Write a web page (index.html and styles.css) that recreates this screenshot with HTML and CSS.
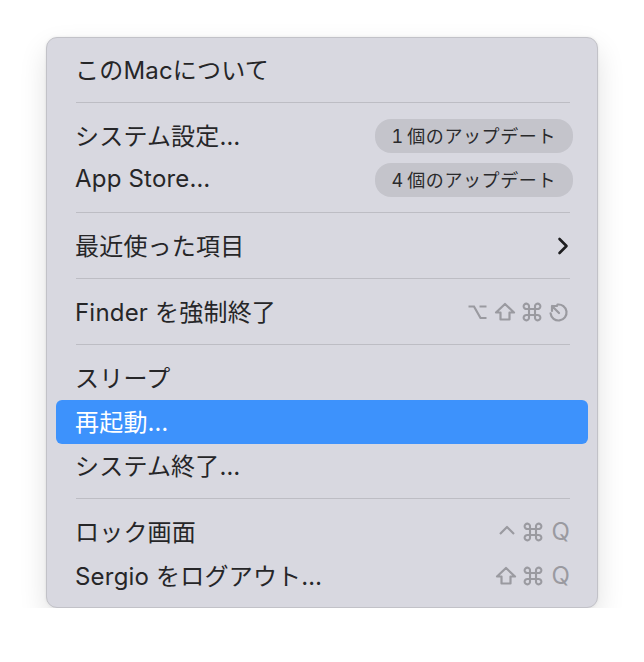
FILE: index.html
```html
<!DOCTYPE html>
<html lang="ja">
<head>
<meta charset="utf-8">
<link rel="stylesheet" href="styles.css">
</head>
<body>
<div class="menu">
  <div class="item"><span class="label">このMacについて</span></div>
  <div class="sep"></div>
  <div class="item"><span class="label">システム設定…</span><span class="badge">1 個のアップデート</span></div>
  <div class="item"><span class="label">App Store…</span><span class="badge">4 個のアップデート</span></div>
  <div class="sep"></div>
  <div class="item"><span class="label">最近使った項目</span>
    <svg class="chev" width="12" height="18" viewBox="0 0 12 18"><polyline points="2.5,2 9.5,9 2.5,16" fill="none" stroke="currentColor" stroke-width="2.6" stroke-linecap="round" stroke-linejoin="round"/></svg>
  </div>
  <div class="sep"></div>
  <div class="item"><span class="label">Finder を強制終了</span>
    <span class="keys">
      <svg class="key" width="21" height="20" viewBox="0 0 21 20"><path d="M1.5 4.5 H7 L13.5 16 H19.5 M12.5 4.5 H19.5" fill="none" stroke="currentColor" stroke-width="2.2"/></svg>
      <svg class="key" width="22" height="20" viewBox="0 0 22 20"><path d="M11 2 L20 10.5 H15.5 V17.5 H6.5 V10.5 H2 Z" fill="none" stroke="currentColor" stroke-width="2.2" stroke-linejoin="round"/></svg>
      <svg class="key" width="20" height="20" viewBox="0 0 20 20"><path d="M7 7 V4.7 A2.7 2.7 0 1 0 4.7 7 H15.3 A2.7 2.7 0 1 0 13 4.7 V15.3 A2.7 2.7 0 1 0 15.3 13 H4.7 A2.7 2.7 0 1 0 7 15.3 Z" fill="none" stroke="currentColor" stroke-width="2.1"/></svg>
      <svg class="key" width="22" height="21" viewBox="0 0 22 21"><path d="M9.4 2.6 A8 8 0 1 1 2.6 11.4" fill="none" stroke="currentColor" stroke-width="2.2" stroke-linecap="round"/><path d="M11 11 L4 4 M4 9 V4 H9" fill="none" stroke="currentColor" stroke-width="2.2" stroke-linecap="round" stroke-linejoin="round"/></svg>
    </span>
  </div>
  <div class="sep"></div>
  <div class="item"><span class="label">スリープ</span></div>
  <div class="item active"><span class="label">再起動…</span></div>
  <div class="item"><span class="label">システム終了…</span></div>
  <div class="sep"></div>
  <div class="item"><span class="label">ロック画面</span>
    <span class="keys">
      <svg class="key" width="20" height="20" viewBox="0 0 20 20"><polyline points="3,12 10,5 17,12" fill="none" stroke="currentColor" stroke-width="2.2" stroke-linejoin="round"/></svg>
      <svg class="key" width="20" height="20" viewBox="0 0 20 20"><path d="M7 7 V4.7 A2.7 2.7 0 1 0 4.7 7 H15.3 A2.7 2.7 0 1 0 13 4.7 V15.3 A2.7 2.7 0 1 0 15.3 13 H4.7 A2.7 2.7 0 1 0 7 15.3 Z" fill="none" stroke="currentColor" stroke-width="2.1"/></svg>
      <span class="q">Q</span>
    </span>
  </div>
  <div class="item"><span class="label">Sergio をログアウト…</span>
    <span class="keys">
      <svg class="key" width="22" height="20" viewBox="0 0 22 20"><path d="M11 2 L20 10.5 H15.5 V17.5 H6.5 V10.5 H2 Z" fill="none" stroke="currentColor" stroke-width="2.2" stroke-linejoin="round"/></svg>
      <svg class="key" width="20" height="20" viewBox="0 0 20 20"><path d="M7 7 V4.7 A2.7 2.7 0 1 0 4.7 7 H15.3 A2.7 2.7 0 1 0 13 4.7 V15.3 A2.7 2.7 0 1 0 15.3 13 H4.7 A2.7 2.7 0 1 0 7 15.3 Z" fill="none" stroke="currentColor" stroke-width="2.1"/></svg>
      <span class="q">Q</span>
    </span>
  </div>
</div>
</body>
</html>
```
FILE: styles.css
```css
html, body {
  margin: 0;
  padding: 0;
  background: #ffffff;
}
body {
  padding: 37px 0 0 46px;
  font-family: "Inter", "Noto Sans CJK JP", sans-serif;
  color: #262628;
}
.menu {
  box-sizing: border-box;
  width: 552px;
  height: 571px;
  padding: 10px 9px 10px 9px;
  background: #d8d8e0;
  border: 1px solid #c2c2c8;
  border-radius: 11px;
  box-shadow: 0 12px 28px rgba(0, 0, 0, 0.12), 0 0 3px rgba(0, 0, 0, 0.08);
  display: flex;
  flex-direction: column;
}
.item {
  height: 44px;
  flex: none;
  display: flex;
  align-items: center;
  justify-content: space-between;
  padding: 0 18px 0 19px;
  border-radius: 6px;
  font-size: 24px;
  letter-spacing: 0.2px;
}
.item.active {
  background: #3d92fc;
  color: #ffffff;
}
.label {
  white-space: nowrap;
  padding-bottom: 4px;
}
.sep {
  flex: none;
  height: 1px;
  margin: 10px 18px 11px 20px;
  background: #bdbdc4;
}
.badge {
  height: 32px;
  display: flex;
  align-items: center;
  padding: 0 17px 2px 16px;
  margin-right: -3px;
  border-radius: 16px;
  background: #c4c4cb;
  font-size: 18px;
  font-variant-numeric: tabular-nums;
  letter-spacing: 0.6px;
  word-spacing: -2px;
  color: #2a2a2c;
}
.chev {
  color: #1e1e20;
  margin-right: 1px;
}
.keys {
  display: flex;
  align-items: center;
  gap: 6px;
  color: #9a9aa0;
}
.key {
  display: block;
}
.q {
  font-size: 24px;
  line-height: 1;
  margin-left: 2px;
}
```
